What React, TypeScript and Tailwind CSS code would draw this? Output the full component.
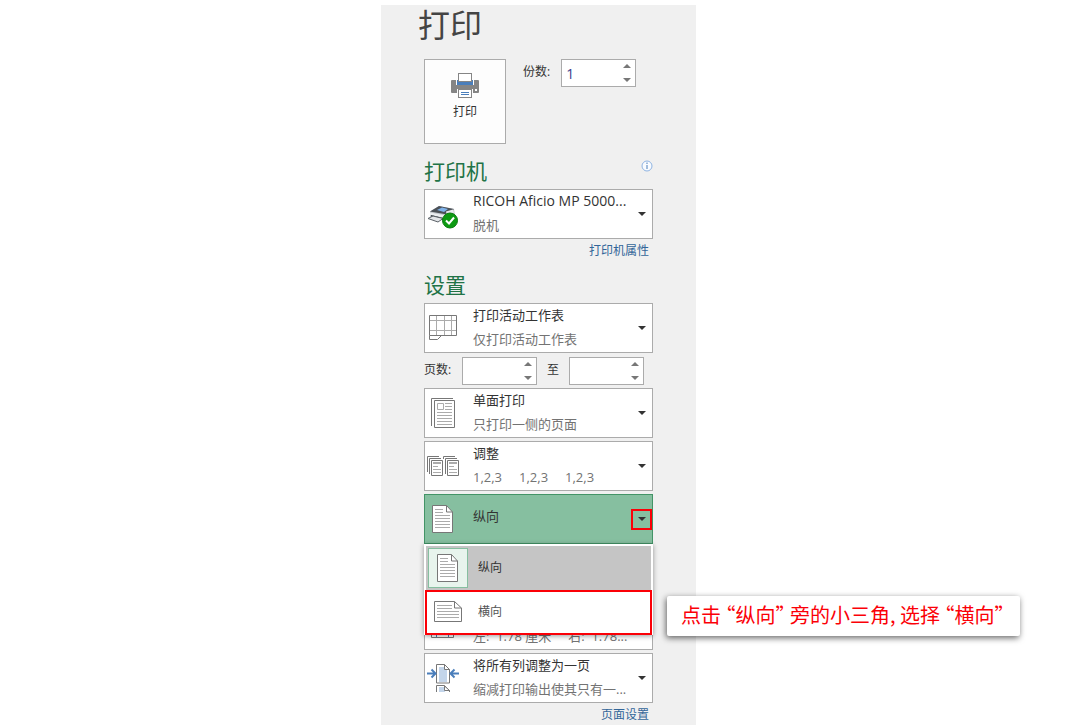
import type { ReactNode } from 'react';

const INK = '#777777';
const LINE = '#ababab';

const PrinterIcon = () => (
  <svg width="28" height="25" viewBox="0 0 28 25" aria-hidden="true">
    <rect x="0" y="7" width="28" height="13" rx="1" fill="#858585" />
    <rect x="5" y="6" width="18" height="6" fill="#fdfdfd" />
    <rect x="6" y="7" width="16" height="5" fill="#4a7ebb" />
    <rect x="7.5" y="0.5" width="13" height="8" fill="#fff" stroke="#858585" />
    <rect x="24" y="16" width="2" height="2" fill="#fff" />
    <rect x="6" y="16" width="16" height="4" fill="#fdfdfd" />
    <rect x="7.5" y="16.5" width="13" height="8" fill="#fff" stroke="#858585" />
    <path d="M10 19.5h8M10 21.5h8" stroke="#4a7ebb" />
  </svg>
);

const DeviceIcon = () => (
  <svg width="32" height="32" viewBox="0 0 32 32" aria-hidden="true">
    <path d="M3 13.5 12 8l15 3 1 6-10 6-15-3Z" fill="#c3c8cd" />
    <path d="M3 13.5 12 8l15 3-7 5.5Z" fill="#4b5157" />
    <path d="M10 12l5-2.5 6 1.5-4 3Z" fill="#7fb2ea" />
    <path d="M19 13.5l7-2 1 4-7 3Z" fill="#e9ecef" />
    <path d="M3 14.5 19 17.5V20L3 17Z" fill="#eceff1" />
    <path d="M4 17l12 3v2L4 19Z" fill="#3a4046" />
    <path d="M1 20.5 6 18l10 2.5-5 3.5Z" fill="#e3e6e9" stroke="#5b6167" />
    <circle cx="23" cy="22.5" r="7.5" fill="#0c9a12" stroke="#087a0c" />
    <path d="m19 22.5 3 3 5-6" fill="none" stroke="#fff" strokeWidth="2" />
  </svg>
);

const SheetIcon = () => (
  <svg width="32" height="32" viewBox="0 0 32 32" fill="none" aria-hidden="true">
    <path d="M9.5 4v19M17.5 4v19M24.5 4v19M3 8.5h26M3 18.5h26" stroke={LINE} />
    <path d="M2.5 3.5h27v20h-27z" stroke={INK} />
    <path d="M2.5 23.5v4h8l4-4" stroke={INK} />
  </svg>
);

const OneSidedIcon = () => (
  <svg width="32" height="32" viewBox="0 0 32 32" fill="none" aria-hidden="true">
    <path d="M4.5 29V1.5H26" stroke={INK} />
    <path d="M7.5 3.5h20v27h-20z" fill="#fff" stroke={INK} />
    <path d="M10.5 6.5h6v6h-6zM18 6.5h7M18 9.5h7M18 12.5h7M10 15.5h15M10 18.5h15M10 21.5h15M10 24.5h15M10 27.5h15" stroke={LINE} />
  </svg>
);

const CollateIcon = () => (
  <svg width="32" height="32" viewBox="0 0 32 32" fill="none" aria-hidden="true">
    {[0, 16].map((x) => (
      <g key={x} transform={`translate(${x} 0)`}>
        <path d={x ? 'M.5 9V6.5H12M2.5 24V8.5H14' : 'M.5 22V6.5H12M2.5 24V8.5H14'} stroke={INK} />
        <path d="M4.5 10.5h11v15h-11z" fill="#fff" stroke={INK} />
        <path d="M6 13h8" stroke={LINE} strokeWidth="2" />
        <path d="M6 16.5h5M6 19.5h8M6 22.5h8" stroke={LINE} />
      </g>
    ))}
  </svg>
);

const PortraitIcon = () => (
  <svg width="32" height="32" viewBox="0 0 32 32" fill="none" aria-hidden="true">
    <path d="M5.5 2.5h14l6 6.5v20.5h-20z" fill="#fff" stroke={INK} />
    <path d="M19.5 2.5v6.5h6" stroke={INK} />
    <path d="M8 6.5h8M8 9.5h8M8 12.5h15M8 15.5h15M8 18.5h15M8 21.5h15M8 24.5h15" stroke={LINE} />
  </svg>
);

const LandscapeIcon = () => (
  <svg width="32" height="32" viewBox="0 0 32 32" fill="none" aria-hidden="true">
    <path d="M2.5 5.5h20l7 6.5v13.5h-27z" fill="#fff" stroke={INK} />
    <path d="M22.5 5.5v6.5h7" stroke={INK} />
    <path d="M5 9.5h15M5 12.5h15M5 15.5h22M5 18.5h22M5 21.5h22" stroke={LINE} />
  </svg>
);

const MarginsIcon = () => (
  <svg width="32" height="32" viewBox="0 0 32 32" fill="none" aria-hidden="true">
    <path d="M4.5 2.5h22v26h-22z" fill="#fff" stroke={INK} />
    <path d="M9.5 3v25M21.5 3v25" stroke="#4a7ebb" />
  </svg>
);

const PaperIcon = () => (
  <svg width="32" height="32" viewBox="0 0 32 32" fill="none" aria-hidden="true">
    <path d="M6.5 2.5h19v26h-19z" fill="#fff" stroke={INK} />
  </svg>
);

const FitColumnsIcon = () => (
  <svg width="32" height="32" viewBox="0 0 32 32" fill="none" aria-hidden="true">
    <path d="M9.5 2.5h8l5 5v13.5h-13z" fill="#fff" stroke={INK} />
    <path d="M12 5h8v15h-8z" fill="#c3d5ea" />
    <path d="M17.5 2.5v5h5z" fill="#fff" stroke={INK} />
    <path d="M9.5 30v-6.5h8l5 5v1.5" fill="#fff" stroke={INK} />
    <path d="M12 25h6v5h-6z" fill="#c3d5ea" />
    <path d="M17.5 24v4.5h5z" fill="#fff" stroke={INK} />
    <path d="M0 11.5h8M4.5 7.5l4 4-4 4M32 11.5h-8M27.5 7.5l-4 4 4 4" stroke="#4a7ebb" strokeWidth="2" />
  </svg>
);

const Caret = ({ up = false }: { up?: boolean }) => (
  <svg width="8" height="4" viewBox="0 0 8 4" aria-hidden="true">
    <path d={up ? 'M0 4h8L4 0z' : 'M0 0h8L4 4z'} fill="currentColor" />
  </svg>
);

interface DropdownProps {
  label: string;
  title: string;
  detail?: ReactNode;
  icon: ReactNode;
  active?: boolean;
  size?: string;
}

// The select carries the title, the icon and second line lie over it in the same cell
const Dropdown = ({ label, title, detail, icon, active = false, size = 'text-[13px]' }: DropdownProps) => (
  <div className="grid h-[50px] text-[13px] leading-5">
    <select
      aria-label={label}
      className={`col-start-1 row-start-1 w-full min-w-0 appearance-none border pl-12 pr-6 text-[#333] outline-none ${size} ${
        active ? 'border-[#439467] bg-[#86bfa0] pb-1.5' : 'border-[#ababab] bg-white pb-[26px]'
      }`}
    >
      <option>{title}</option>
    </select>
    <div className="pointer-events-none col-start-1 row-start-1 flex min-w-0 items-center pl-[3px] text-[#333]">
      {icon}
      <div className="ml-3.5 mt-[22px] h-5 min-w-0 flex-1 whitespace-pre text-[#737373]">{detail}</div>
      {active ? (
        <span className="mr-px flex h-[21px] w-[21px] items-center justify-center border-2 border-[#fb0007]">
          <Caret />
        </span>
      ) : (
        <span className="mr-[7px]">
          <Caret />
        </span>
      )}
    </div>
  </div>
);

const Spinner = ({ id, value = '' }: { id: string; value?: string }) => (
  <div className="flex h-7 w-[75px] border border-[#ababab] bg-white">
    <input
      id={id}
      type="text"
      defaultValue={value}
      className="w-full min-w-0 bg-transparent pl-1 text-[14px] text-[#3c3c8c] outline-none"
    />
    <div className="flex w-4 shrink-0 flex-col items-center justify-between py-1 text-[#777]">
      <button type="button" aria-label="增加">
        <Caret up />
      </button>
      <button type="button" aria-label="减少">
        <Caret />
      </button>
    </div>
  </div>
);

const OrientationMenu = () => (
  <div className="absolute left-0 top-full z-10 w-full shadow-[0_1px_5px_rgba(0,0,0,0.4)]">
    <ul role="listbox" aria-label="方向" className="bg-white px-px pt-0.5 text-xs text-[#333]">
      <li role="option" aria-selected="true" className="px-px">
        <button type="button" className="flex h-11 w-full items-center bg-[#c5c5c5] pl-0.5">
          <span className="flex h-10 w-10 items-center justify-center border border-[#86bfa0] bg-[#e8f4ed]">
            <PortraitIcon />
          </span>
          <span className="ml-2.5">纵向</span>
        </button>
      </li>
      <li role="option" aria-selected="false" className="relative">
        <button type="button" className="flex h-[45px] w-full items-center border-2 border-[#fb0007] bg-white pb-0.5 pl-[5px]">
          <LandscapeIcon />
          <span className="ml-3.5 text-[#555]">横向</span>
        </button>
        <p className="absolute left-full top-1.5 ml-[15px] h-10 whitespace-nowrap rounded-xs bg-white pl-3.5 pr-4 font-['Noto_Sans_CJK_SC',sans-serif] text-xl leading-[38px] text-[#fb0007] shadow-[-1px_2px_6px_rgba(0,0,0,0.6)] [font-feature-settings:'halt']">
          点击 “纵向” 旁的小三角, 选择 “横向”
        </p>
      </li>
    </ul>
  </div>
);

const App = () => {
  return (
    <div className="min-h-screen bg-white pr-0.5 pt-[5px] font-['Open_Sans','Noto_Sans_CJK_SC',sans-serif]">
      <main className="mx-auto w-full max-w-[315px] bg-[#f0f0f0] px-[43px]">
        <h1 className="-ml-1.5 h-[54px] text-[32px] leading-10 text-[#444]">打印</h1>

        <section className="flex">
          <button
            type="button"
            className="flex h-[85px] w-[82px] flex-col items-center gap-1.5 border border-[#ababab] bg-[#fdfdfd] pt-[13px] text-xs leading-4 text-[#333]"
          >
            <PrinterIcon />
            打印
          </button>
          <label htmlFor="copies" className="ml-[17px] mr-[11px] mt-[5px] text-xs leading-4 text-[#333]">
            份数:
          </label>
          <Spinner id="copies" value="1" />
        </section>

        <section className="mt-3">
          <div className="flex h-[33px] justify-between">
            <h2 className="text-[21px] leading-[30px] text-[#217346]">打印机</h2>
            <button type="button" aria-label="打印机信息" className="mt-1 self-start">
              <svg width="12" height="12" viewBox="0 0 12 12" aria-hidden="true">
                <circle cx="6" cy="6" r="5" fill="#f8fbff" stroke="#8fb4e3" />
                <path d="M6 2.5v1.5M6 5v4" stroke="#4a7ebb" />
              </svg>
            </button>
          </div>
          <Dropdown label="打印机" title="RICOH Aficio MP 5000..." detail="脱机" icon={<DeviceIcon />} size="text-[14px]" />
          <div className="mr-1 mt-1 text-right text-xs leading-4">
            <a href="#printer" className="text-[#336699]">打印机属性</a>
          </div>
        </section>

        <section className="mt-[11px]">
          <h2 className="h-[33px] text-[21px] leading-[30px] text-[#217346]">设置</h2>
          <div className="flex flex-col gap-[3px]">
            <Dropdown label="打印范围" title="打印活动工作表" detail="仅打印活动工作表" icon={<SheetIcon />} />
            <div className="mt-px flex text-xs leading-[26px] text-[#333]">
              <label htmlFor="from" className="w-[38px]">页数:</label>
              <Spinner id="from" />
              <label htmlFor="to" className="w-8 text-center">至</label>
              <Spinner id="to" />
            </div>
            <Dropdown label="单双面" title="单面打印" detail="只打印一侧的页面" icon={<OneSidedIcon />} />
            <Dropdown
              label="排序"
              title="调整"
              detail={
                <span className="flex gap-[17px]">
                  <span>1,2,3</span>
                  <span>1,2,3</span>
                  <span>1,2,3</span>
                </span>
              }
              icon={<CollateIcon />}
            />
            <div className="relative">
              <Dropdown label="方向" title="纵向" icon={<PortraitIcon />} active />
              <OrientationMenu />
            </div>
            <Dropdown label="纸张" title="A4" detail="21 厘米 x 29.7 厘米" icon={<PaperIcon />} />
            <Dropdown
              label="边距"
              title="自定义边距"
              detail={
                <span className="flex gap-[17px]">
                  <span>左:  1.78 厘米</span>
                  <span>右:  1.78...</span>
                </span>
              }
              icon={<MarginsIcon />}
            />
            <Dropdown label="缩放" title="将所有列调整为一页" detail="缩减打印输出使其只有一..." icon={<FitColumnsIcon />} />
          </div>
          <div className="mr-1 mt-1 pb-0.5 text-right text-xs leading-4">
            <a href="#page-setup" className="text-[#336699]">页面设置</a>
          </div>
        </section>
      </main>
    </div>
  );
};

export default App;
